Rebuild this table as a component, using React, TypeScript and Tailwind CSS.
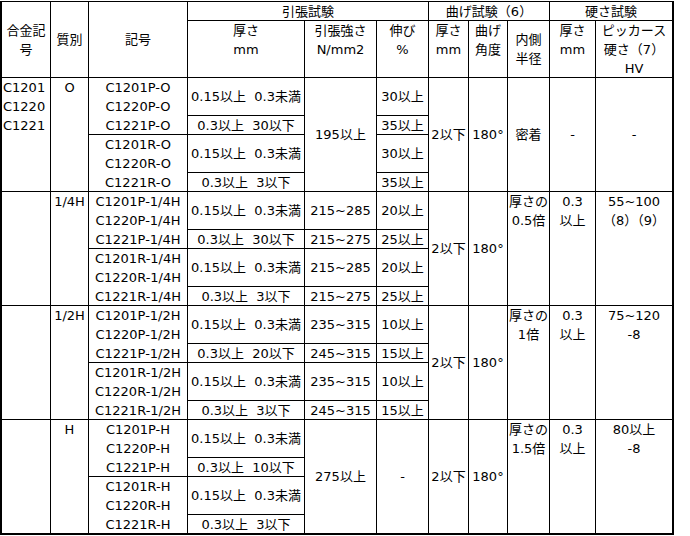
type Cell = {
  t: string;
  rs?: number;
  cs?: number;
  top?: boolean;
  left?: boolean;
};

const rowSpan: Record<number, string> = {
  1: "",
  2: "row-span-2",
  3: "row-span-3",
  6: "row-span-6",
};

const colSpan: Record<number, string> = {
  1: "",
  2: "col-span-2",
  3: "col-span-3",
};

const header: Cell[] = [
  { t: "合金記号", rs: 2 },
  { t: "質別", rs: 2 },
  { t: "記号", rs: 2 },
  { t: "引張試験", cs: 3 },
  { t: "曲げ試験（6）", cs: 3 },
  { t: "硬さ試験", cs: 2 },
  { t: "厚さ\nmm", top: true },
  { t: "引張強さ\nN/mm2", top: true },
  { t: "伸び\n%", top: true },
  { t: "厚さ\nmm", top: true },
  { t: "曲げ\n角度", top: true },
  { t: "内側\n半径" },
  { t: "厚さ\nmm", top: true },
  { t: "ピッカース\n硬さ（7）\nHV", top: true },
];

interface Group {
  alloy: string;
  temper: string;
  suffix: string;
  pMax: string;
  tensile: string[];
  elong: string[];
  radius: string;
  hardT: string;
  hv: string;
  topRight: boolean;
}

const groups: Group[] = [
  {
    alloy: "C1201\nC1220\nC1221",
    temper: "O",
    suffix: "O",
    pMax: "30以下",
    tensile: ["195以上"],
    elong: ["30以上", "35以上", "30以上", "35以上"],
    radius: "密着",
    hardT: "-",
    hv: "-",
    topRight: false,
  },
  {
    alloy: "",
    temper: "1/4H",
    suffix: "1/4H",
    pMax: "30以下",
    tensile: ["215~285", "215~275", "215~285", "215~275"],
    elong: ["20以上", "25以上", "20以上", "25以上"],
    radius: "厚さの\n0.5倍",
    hardT: "0.3\n以上",
    hv: "55~100\n（8）（9）",
    topRight: true,
  },
  {
    alloy: "",
    temper: "1/2H",
    suffix: "1/2H",
    pMax: "20以下",
    tensile: ["235~315", "245~315", "235~315", "245~315"],
    elong: ["10以上", "15以上", "10以上", "15以上"],
    radius: "厚さの\n1倍",
    hardT: "0.3\n以上",
    hv: "75~120\n-8",
    topRight: true,
  },
  {
    alloy: "",
    temper: "H",
    suffix: "H",
    pMax: "10以下",
    tensile: ["275以上"],
    elong: ["-"],
    radius: "厚さの\n1.5倍",
    hardT: "0.3\n以上",
    hv: "80以上\n-8",
    topRight: true,
  },
];

function groupCells(g: Group): Cell[] {
  const names = (k: string) =>
    ["C1201", "C1220", "C1221"].map((a) => `${a}${k}-${g.suffix}`).join("\n");
  const split = g.tensile.length === 4;
  const splitE = g.elong.length === 4;
  const cells: Cell[] = [
    { t: g.alloy, rs: 6, top: true, left: true },
    { t: g.temper, rs: 6, top: true },
    { t: names("P"), rs: 3, top: true },
    { t: "0.15以上  0.3未満", rs: 2 },
    { t: g.tensile[0], rs: split ? 2 : 6 },
    { t: g.elong[0], rs: splitE ? 2 : 6 },
    { t: "2以下", rs: 6 },
    { t: "180°", rs: 6 },
    { t: g.radius, rs: 6, top: g.topRight },
    { t: g.hardT, rs: 6, top: g.topRight },
    { t: g.hv, rs: 6, top: g.topRight },
    // row 3
    { t: `0.3以上  ${g.pMax}` },
  ];
  if (split) cells.push({ t: g.tensile[1] });
  if (splitE) cells.push({ t: g.elong[1] });
  // row 4
  cells.push({ t: names("R"), rs: 3, top: true });
  cells.push({ t: "0.15以上  0.3未満", rs: 2 });
  if (split) cells.push({ t: g.tensile[2], rs: 2 });
  if (splitE) cells.push({ t: g.elong[2], rs: 2 });
  // row 6
  cells.push({ t: "0.3以上  3以下" });
  if (split) cells.push({ t: g.tensile[3] });
  if (splitE) cells.push({ t: g.elong[3] });
  return cells;
}

const cells: Cell[] = [...header, ...groups.flatMap(groupCells)];

export default function App() {
  return (
    <div
      className="w-[690px] h-[536px] bg-white pt-px text-[13px] text-black"
      style={{ fontFamily: '"DejaVu Sans", "Noto Sans CJK JP", sans-serif' }}
    >
      <div className="inline-grid grid-cols-[48px_37px_98px_116px_71px_51px_39px_38px_41px_45px_76px] grid-rows-[18px_56px_repeat(24,18px)] gap-px bg-black p-[2px] pt-px">
        {cells.map((c, i) => (
          <div
            key={i}
            className={`${rowSpan[c.rs ?? 1]} ${colSpan[c.cs ?? 1]} min-h-0 bg-white flex flex-col leading-[19px] whitespace-pre-wrap ${
              c.top ? "justify-start" : "justify-center"
            } ${c.left ? "text-left pl-px" : "text-center"}`}
          >
            {c.t}
          </div>
        ))}
      </div>
    </div>
  );
}
